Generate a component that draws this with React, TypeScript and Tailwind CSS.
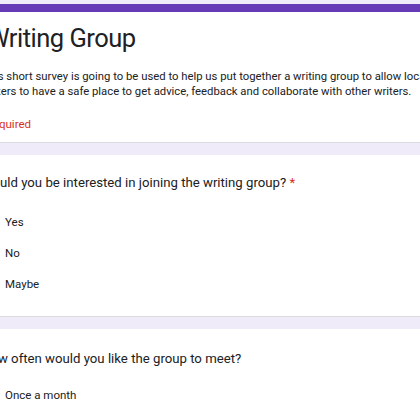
export default function App() {
  return (
    <div className="w-[420px] h-[420px] overflow-hidden bg-[#f0ebf8] font-['Roboto',sans-serif] text-[#202124]">
      <div className="ml-[-40px] w-[520px] pt-[4px] flex flex-col gap-[12px]">
        {/* header card */}
        <div className="bg-white border-b border-[#dadce0]">
          <div className="h-[8px] bg-[#673ab7]" />
          <div className="pl-[27px] pt-[10px] pb-[10px]">
            <h1 className="text-[25.5px] leading-[32px] tracking-[-0.5px]">Writing Group</h1>
            <p className="mt-[15px] w-[455px] ml-[-5px] text-[11.3px] leading-[15px]">
              This short survey is going to be used to help us put together a writing group to allow local writers to have a safe place to get advice, feedback and collaborate with other writers.
            </p>
            <p className="mt-[17px] ml-[-9px] text-[11.5px] leading-[16px] text-[#d93025]">* Required</p>
          </div>
        </div>

        {/* question 1 */}
        <div className="bg-white border-b border-[#dadce0] pl-[21px] pt-[18px] pb-[21px]">
          <div className="text-[13.2px] leading-[20px]">
            Would you be interested in joining the writing group? <span className="text-[#d93025]">*</span>
          </div>
          <div className="mt-[20px] ml-[24px] flex flex-col gap-[11px] text-[11.5px]">
            {["Yes", "No", "Maybe"].map((o) => (
              <div key={o} className="flex items-center h-[20px]">
                {o}
              </div>
            ))}
          </div>
        </div>

        {/* question 2 */}
        <div className="bg-white border-b border-[#dadce0] pl-[21px] pt-[20px] pb-[22px]">
          <div className="text-[13.2px] leading-[20px]">How often would you like the group to meet?</div>
          <div className="mt-[17px] ml-[24px] flex flex-col gap-[11px] text-[11.5px]">
            {["Once a month", "Twice a month", "Once a week"].map((o) => (
              <div key={o} className="flex items-center h-[20px]">
                {o}
              </div>
            ))}
          </div>
        </div>
      </div>
    </div>
  );
}
